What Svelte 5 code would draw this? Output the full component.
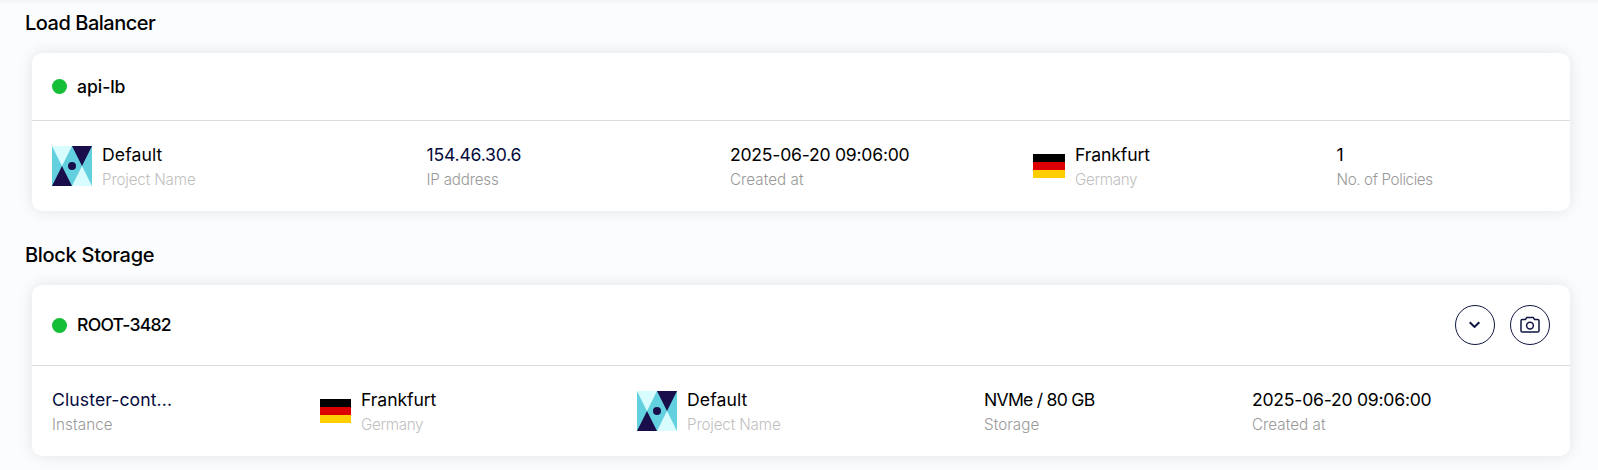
<script>
  const sections = [
    {
      title: 'Load Balancer', titleSpacing: -0.48, name: 'api-lb', nameSpacing: -0.05,
      kind: 'balancer', actions: false,
      cells: [
        { icon: 'project', value: 'Default', vs: 0.1, label: 'Project Name', ls: -0.15 },
        { value: '154.46.30.6', vs: -0.2, label: 'IP address', ls: -0.2, link: true },
        { value: '2025-06-20 09:06:00', vs: -0.24, label: 'Created at', ls: 0.05 },
        { icon: 'flag', value: 'Frankfurt', vs: -0.12, label: 'Germany', ls: -0.33 },
        { value: '1', vs: 0, label: 'No. of Policies', ls: -0.37 }
      ]
    },
    {
      title: 'Block Storage', titleSpacing: -0.3, name: 'ROOT-3482', nameSpacing: -0.75,
      kind: 'storage', actions: true,
      cells: [
        { value: 'Cluster-cont...', vs: 0.1, label: 'Instance', ls: 0.1, link: true },
        { icon: 'flag', value: 'Frankfurt', vs: -0.08, label: 'Germany', ls: -0.33 },
        { icon: 'project', value: 'Default', vs: 0.1, label: 'Project Name', ls: -0.15 },
        { value: 'NVMe / 80 GB', vs: -0.74, label: 'Storage', ls: 0.07 },
        { value: '2025-06-20 09:06:00', vs: -0.24, label: 'Created at', ls: 0.05 }
      ]
    }
  ];
</script>

<main>
  {#each sections as s}
    <section>
      <h2 style="letter-spacing:{s.titleSpacing}px">{s.title}</h2>
      <article class="card {s.kind}">
        <header>
          <span class="dot"></span>
          <span class="name" style="letter-spacing:{s.nameSpacing}px">{s.name}</span>
          {#if s.actions}
            <div class="actions">
              <button aria-label="Expand">
                <svg width="12" height="8" viewBox="0 0 12 8"><path d="M.7 1.2 5.5 5.9l4.8-4.7" fill="none" stroke="#0f1440" stroke-width="2.1" /></svg>
              </button>
              <button aria-label="Snapshot">
                <svg width="20" height="18" viewBox="0 0 20 18" fill="none" stroke="#0f1440" stroke-width="1.5"><path d="M2.4 3.6H5.4L6.8 1.4H13.2L14.6 3.6H17.6Q19 3.6 19 5V14.7Q19 16.1 17.6 16.1H2.4Q1 16.1 1 14.7V5Q1 3.6 2.4 3.6Z" stroke-linejoin="round" /><circle cx="10" cy="9.6" r="3.4" /></svg>
              </button>
            </div>
          {/if}
        </header>
        <div class="details">
          {#each s.cells as c}
            <div class="cell">
              {#if c.icon === 'project'}
                <svg class="project" viewBox="0 0 40 40"><rect width="40" height="40" fill="#62d0df" /><path d="M0 0H20L10 20ZM20 40H40L30 20Z" fill="#d9fdff" /><path d="M20 0H40L30 20ZM0 40H20L10 20Z" fill="#190d4b" /><circle cx="20" cy="20" r="4" fill="#190d4b" /></svg>
              {:else if c.icon === 'flag'}
                <svg class="flag" viewBox="0 0 32 24" preserveAspectRatio="none"><path d="M0 0H32V8H0Z" /><path d="M0 8H32V16H0Z" fill="#d00" /><path d="M0 16H32V24H0Z" fill="#ffce00" /></svg>
              {/if}
              <div class="text" class:muted={c.icon}>
                <div class="value" class:link={c.link} style="letter-spacing:{c.vs}px">{c.value}</div>
                <div class="label" style="letter-spacing:{c.ls}px">{c.label}</div>
              </div>
            </div>
          {/each}
        </div>
      </article>
    </section>
  {/each}
</main>

<style>
  :global(body) { margin: 0; background: #fbfcfe; overflow: hidden; }
  main { box-sizing: border-box; height: 470px; padding: 8px 28px 0 25px; overflow: hidden; font-family: Inter, sans-serif; color: #000; box-shadow: inset 0 5px 5px -4px rgba(0, 0, 0, .05); }
  section { margin-bottom: 29px; }
  h2 { margin: 0; height: 30px; font-size: 20px; line-height: 30px; font-weight: 500; }
  .card { margin: 15px 0 0 7px; border-radius: 10px; background: #fff; box-shadow: 0 0 15px rgba(0, 0, 0, .1); }
  header { box-sizing: border-box; display: flex; align-items: center; height: 68px; padding: 0 20px; border-bottom: 1px solid #dcdcdc; }
  .storage header { height: 81px; }
  .dot { width: 15px; height: 15px; border-radius: 50%; background: #14bf37; }
  .name { margin-left: 10px; font-size: 17.6px; font-weight: 500; line-height: 26px; }
  .actions { margin-left: auto; display: flex; gap: 15px; }
  button { display: grid; place-items: center; width: 40px; height: 40px; padding: 0; border: 1px solid #0f1440; border-radius: 50%; background: #fff; }
  .details { display: grid; align-items: center; box-sizing: border-box; height: 90px; padding: 0 0 0 20px; }
  .balancer .details { grid-template-columns: 374.5px 303.5px 303px 303.5px 1fr; }
  .storage .details { grid-template-columns: 268px 317px 347px 268px 1fr; }
  .cell { display: flex; align-items: center; gap: 10px; white-space: nowrap; }
  .project { width: 40px; height: 40px; }
  .flag { width: 32px; height: 24px; }
  .storage .flag { width: 31px; }
  .value { font-size: 17.6px; line-height: 26px; }
  .link { color: #040b3c; }
  .label { font-size: 15.2px; line-height: 23px; font-weight: 300; color: #999; }
  .muted .label { color: #bfbfbf; }
</style>
